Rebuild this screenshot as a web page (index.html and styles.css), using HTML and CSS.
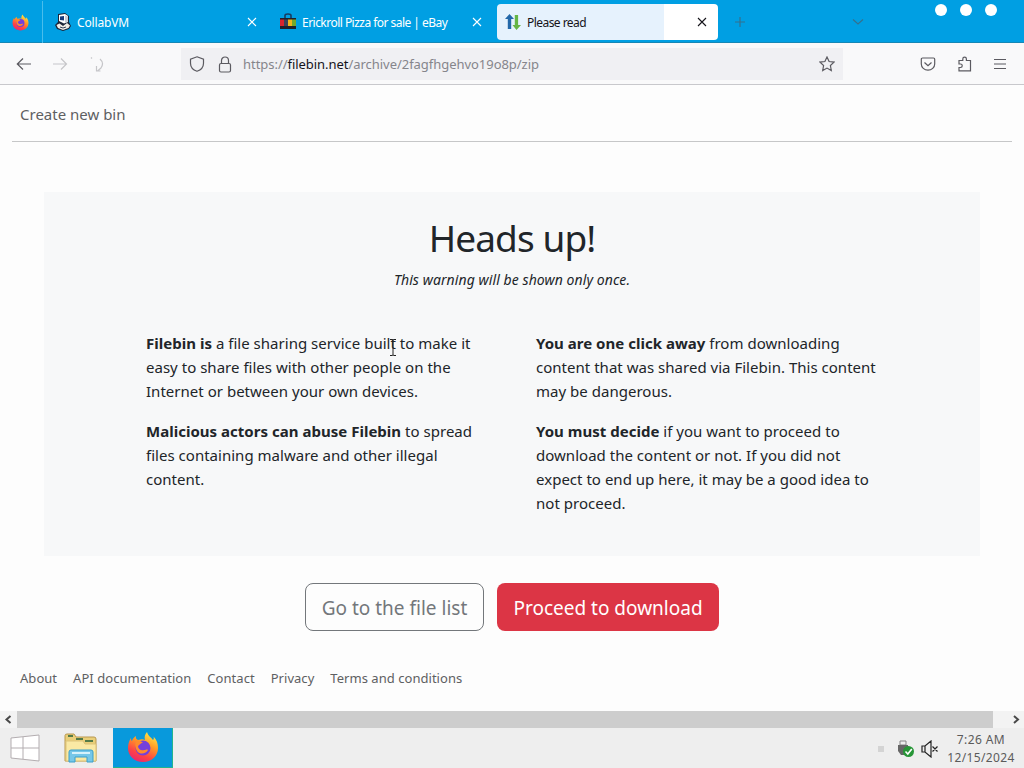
FILE: index.html
```
<!DOCTYPE html>
<html lang="en">
<head>
  <meta charset="UTF-8" />
  <meta name="viewport" content="width=device-width, initial-scale=1.0"/>
  <title>Please read</title>
  <link rel="stylesheet" href="styles.css">
</head>
<body>

  <!-- Tab strip -->
  <div class="tabs">
    <div class="pinned">
      <svg width="17" height="17" viewBox="0 0 32 32">
        <use href="#firefox"/>
      </svg>
    </div>
    <div class="tab tab-first">
      <svg class="favicon" width="18" height="18" viewBox="0 0 18 18">
        <path d="M4 1l7-1 4 3v6l2 4-2 3-6 2-6-2-2-4 3-3z" fill="#1b2438"/>
        <path d="M5 2l6-1 3 2v6l-4 1.500L5 8z" fill="#fff"/>
        <path d="M6 3.500l4-.5v4.500L6 7z" fill="#173a79"/>
        <path d="M11 2.500l3 1v5l-3 1.500z" fill="#c9ced8"/>
        <path d="M2.500 12l3-1.500L9 13l4-3 3 2.500-1.500 2.500L9 17l-5-2z" fill="#f0ece5"/>
        <path d="M6 14l3 1 3-1" fill="none" stroke="#34405a"/>
      </svg>
      <span class="tab-title title-collab">CollabVM</span>
      <svg class="close" width="10" height="10" viewBox="0 0 10 10"><path d="M1 1l8 8M9 1L1 9"/></svg>
    </div>
    <div class="tab tab-second">
      <svg class="favicon" width="16" height="17" viewBox="0 0 16 17">
        <path d="M5 6V2.5Q5 1 8 1t3 1.5V6" fill="none" stroke="#173b62" stroke-width="1.6"/>
        <path d="M0 5h4v9H0z" fill="#d9232e"/>
        <path d="M4 5h4v9H4z" fill="#3a4258"/>
        <path d="M8 5h4v9H8z" fill="#f2b51c"/>
        <path d="M12 5h4v9h-4z" fill="#75a92c"/>
        <path d="M0 13h16v3H0zM0 5h16v1.5H0z" fill="#20202b"/>
      </svg>
      <span class="tab-title title-ebay">Erickroll Pizza for sale | eBay</span>
      <svg class="close" width="10" height="10" viewBox="0 0 10 10"><path d="M1 1l8 8M9 1L1 9"/></svg>
    </div>
    <div class="tab active">
      <svg class="favicon" width="16" height="16" viewBox="0 0 16 16">
        <path d="M4.5 0L9 5H6.2v10H2.8V5H0z" fill="#2468a9"/>
        <path d="M11.5 16L7.5 11h2.3V1h3.3v10H16z" fill="#65b545"/>
      </svg>
      <span class="tab-title title-read">Please read</span>
      <svg class="close" width="10" height="10" viewBox="0 0 10 10"><path d="M1 1l8 8M9 1L1 9"/></svg>
    </div>
    <svg class="new-tab" width="12" height="12" viewBox="0 0 12 12"><path d="M6 1v10M1 6h10"/></svg>
    <svg class="all-tabs" width="12" height="8" viewBox="0 0 12 8"><path d="M1 1.5l5 4.5 5-4.5"/></svg>
    <div class="controls"><i></i><i></i><i></i></div>
  </div>

  <!-- Navigation toolbar -->
  <div class="toolbar">
    <svg class="nav-icon back" width="16" height="16" viewBox="0 0 16 16"><path d="M15 8H1.500M7 2.500L1.300 8 7 13.500"/></svg>
    <svg class="nav-icon forward" width="16" height="16" viewBox="0 0 16 16"><path d="M1 8h13.5M9 2.5L14.5 8 9 13.5"/></svg>
    <svg class="nav-icon reload" width="16" height="18" viewBox="0 0 16 18"><path d="M2 2.500l1 1M11 4q4.500 4 1 9l-3.500 3M7.500 11v5h4"/></svg>
    <div class="urlbar">
      <svg width="16" height="16" viewBox="0 0 16 16"><path d="M8 .8l6.500 2.400v4c0 4-2.600 6.700-6.500 8.100C4.100 13.900 1.500 11.200 1.500 7.200v-4z"/></svg>
      <svg class="lock" width="14" height="17" viewBox="0 0 14 17"><rect x="1.500" y="7.500" width="11" height="8.500" rx="1.500"/><path d="M3.500 7.500v-3a3.500 3.500 0 0 1 7 0v3"/></svg>
      <span class="url">https://<b>filebin.net</b>/archive/2fagfhgehvo19o8p/zip</span>
      <svg class="star" width="16" height="16" viewBox="0 0 16 16"><path d="M8 1l2.100 4.500 4.900.6-3.600 3.400.9 5L8 12.100l-4.300 2.400.9-5L1 6.100l4.900-.6z"/></svg>
    </div>
    <div class="tools">
      <svg width="16" height="16" viewBox="0 0 16 16"><path d="M2.500 2h11q1.200 0 1.200 1.200V8a6.700 6.200 0 0 1-13.400 0V3.200Q1.300 2 2.500 2zM4.500 6.500L8 9.800l3.500-3.300"/></svg>
      <svg width="16" height="16" viewBox="0 0 16 16"><path d="M2 4.500h3.800V3a1.800 1.800 0 0 1 3.600 0v1.500h4.100v10.300H2v-3.300h1.500a1.600 1.600 0 0 0 0-3.500H2z"/></svg>
      <svg width="14" height="16" viewBox="0 0 14 16"><path d="M1 3.500h12M1 8h12M1 12.500h12"/></svg>
    </div>
  </div>

  <!-- Page -->
  <main class="page">
    <nav class="navbar"><a>Create new bin</a></nav>

    <section class="notice">
      <h1>Heads up!</h1>
      <p class="lead"><em>This warning will be shown only once.</em></p>
      <div class="columns">
        <div class="column">
          <p><strong>Filebin is</strong> a file sharing service built to make it<br>easy to share files with other people on the<br>Internet or between your own devices.</p>
          <p><strong>Malicious actors can abuse Filebin</strong> to spread<br>files containing malware and other illegal<br>content.</p>
        </div>
        <div class="column">
          <p><strong>You are one click away</strong> from downloading<br>content that was shared via Filebin. This content<br>may be dangerous.</p>
          <p><strong>You must decide</strong> if you want to proceed to<br>download the content or not. If you did not<br>expect to end up here, it may be a good idea to<br>not proceed.</p>
        </div>
      </div>
    </section>

    <div class="actions">
      <a class="btn btn-outline"><span>Go to the file list</span></a>
      <a class="btn btn-danger"><span>Proceed to download</span></a>
    </div>

    <footer class="footer">
      <a>About</a><a>API documentation</a><a>Contact</a><a>Privacy</a><a>Terms and conditions</a>
    </footer>
  </main>

  <!-- Horizontal scrollbar -->
  <div class="scrollbar">
    <svg width="17" height="17" viewBox="0 0 17 17"><path d="M10.500 5L6.500 8.500l4 3.500"/></svg>
    <div class="thumb"></div>
    <svg width="17" height="17" viewBox="0 0 17 17"><path d="M7 5l4 3.500L7 12"/></svg>
  </div>

  <!-- Taskbar -->
  <div class="taskbar">
    <svg class="start" width="30" height="28" viewBox="0 0 30 28">
      <path d="M1 4L29 1v26L1 24zM13 3v22M1 14h28" fill="#fff" stroke="#b3adb0"/>
    </svg>
    <svg class="explorer" width="34" height="32" viewBox="0 0 34 32">
      <path d="M1 3.500Q1 2 3 2h7l2 3h18q2 0 2 2v22H1z" fill="#e9cf79" stroke="#b99850"/>
      <path d="M4 4h5M12 7h7M21 9h8" stroke="#527a48" stroke-width="2"/>
      <path d="M2 9h17l2 3h11v17H2z" fill="#fae9a4" stroke="#dcc37a"/>
      <path d="M5 30V20q0-2 2-2h20q2 0 2 2v10h-6v-5H11v5z" fill="#76c7e8" stroke="#3a9fcb"/>
      <path d="M8 21h18" stroke="#d6f2fb" stroke-width="2"/>
    </svg>
    <div class="task-active">
      <svg width="32" height="32" viewBox="0 0 32 32">
        <defs>
          <linearGradient id="flame" x1=".8" y1="0" x2=".3" y2="1">
            <stop offset="0" stop-color="#fff04b"/>
            <stop offset=".4" stop-color="#ff9a26"/>
            <stop offset=".75" stop-color="#ff4245"/>
            <stop offset="1" stop-color="#e62772"/>
          </linearGradient>
        </defs>
        <g id="firefox">
          <path d="M20 1c1 4 4 5 6 8 1-1 1-2 .5-3.500C30 9 31 13 31 17c0 8-6.500 14-15 14S1 25 1 17c0-4 1-7 3-10 0 2 .5 3 1 3 .5-2 2-4 4-5-.5 2 .2 3 2 4 3-1 5-1 7 0-1-3 0-6 2-8z" fill="url(#flame)"/>
          <circle cx="16" cy="17" r="7.500" fill="#7440dc"/>
          <path d="M9 10c3-1 5 0 7 2-3 0-3 2-5 3 0 3 3 5 6 4 2 0 3-1 4 0-2 4-8 5-11 1-2-3-2-7-1-10z" fill="#ff8b2c"/>
        </g>
      </svg>
    </div>
    <div class="tray">
      <i class="tray-dot"></i>
      <svg class="usb" width="18" height="18" viewBox="0 0 18 18">
        <path d="M3 1h6v4H3z" fill="#eee" stroke="#858585"/>
        <path d="M1 5h10v6l-2 4H4l-3-4z" fill="#666"/>
        <circle cx="11.500" cy="11.500" r="5.500" fill="#279637"/>
        <path d="M8.500 11.500l2.300 2.500 4-5" fill="none" stroke="#fff" stroke-width="1.600"/>
      </svg>
      <svg class="volume" width="18" height="18" viewBox="0 0 18 18">
        <path d="M1 6h3l6-5v16l-6-5H1zM4 6v6M11.500 6.500l5 5M16.500 6.500l-5 5" fill="none" stroke="#222" stroke-width="1.200"/>
      </svg>
      <div class="clock"><span class="time">7:26 AM</span><span class="date">12/15/2024</span></div>
    </div>
  </div>

  <!-- Text cursor -->
  <svg class="cursor" width="8" height="17" viewBox="0 0 8 17"><path d="M1 .5h2.500l.5 1 .5-1H7M4 1.500v14M1 16.500h2.500l.5-1 .5 1H7"/></svg>

</body>
</html>
```

FILE: styles.css
```
* { box-sizing: border-box; }
body {
  margin: 0;
  width: 1024px;
  height: 768px;
  overflow: hidden;
  display: flex;
  flex-direction: column;
  background: #fdfdfd;
  color: #212529;
  font-family: "Noto Sans", "Open Sans", sans-serif;
  font-size: 15px;
}
svg { flex: none; display: block; }

/* Tab strip */
.tabs {
  height: 43px;
  display: flex;
  align-items: center;
  padding-top: 1px;
  background: #009fe3;
  border-bottom: 1px solid #1687b5;
  font-size: 12px;
}
.pinned {
  width: 43px;
  height: 42px;
  padding: 13px 0 0 12px;
  border-right: 1px solid #49bdec;
}
.tab {
  height: 36px;
  display: flex;
  align-items: center;
  color: #fff;
}
.tab-first { width: 225px; padding: 0 11px; }
.tab-second { width: 229px; padding: 0 15px 0 12px; }
.active {
  width: 221px;
  padding: 0 11px 0 8px;
  border-radius: 4px;
  color: #15141a;
  background: linear-gradient(90deg, #e6f2fd 167px, #fff 167px);
}
.tab-title { margin-left: 6px; padding-top: 1px; white-space: nowrap; }
.tab-first .tab-title { margin-left: 5px; }
.title-collab { letter-spacing: -0.15px; }
.title-ebay { letter-spacing: -0.53px; }
.title-read { letter-spacing: -0.55px; }
.close {
  margin-left: auto;
  fill: none;
  stroke: currentColor;
  stroke-width: 1.1;
}
.new-tab, .all-tabs { fill: none; stroke: #34718e; stroke-width: 1.2; }
.new-tab { margin-left: 16px; }
.all-tabs { margin-left: 106px; }
.controls {
  display: flex;
  gap: 13px;
  align-self: flex-start;
  margin: 3px 0 0 71px;
}
.controls i {
  width: 12px;
  height: 12px;
  border-radius: 50%;
  background: #fff;
}

/* Toolbar */
.toolbar {
  height: 42px;
  display: flex;
  align-items: center;
  padding-left: 16px;
  padding-top: 1px;
  background: #f9f9fa;
  border-bottom: 1px solid #c8c8cc;
}
.toolbar svg { fill: none; stroke: #5b5a60; stroke-width: 1.2; }
.toolbar .forward, .toolbar .reload { stroke: #c6c6c9; }
.forward { margin-left: 20px; }
.reload { margin-left: 21px; }
.urlbar {
  width: 662px;
  height: 32px;
  margin-left: 76px;
  padding: 0 8px;
  display: flex;
  align-items: center;
  background: #f0f0f3;
}
.lock { margin-left: 13px; }
.url {
  margin-left: 11px;
  font-size: 13px;
  letter-spacing: -0.04px;
  color: #85858b;
  white-space: nowrap;
}
.url b { font-weight: 400; color: #15141a; }
.star { margin-left: auto; }
.tools {
  display: flex;
  align-items: center;
  gap: 21px;
  margin-left: 77px;
}
.tools svg:last-child { margin-left: -1px; }

/* Page */
.page { height: 626px; padding: 0 12px; }
.navbar {
  height: 57px;
  padding: 17px 8px 0;
  line-height: 24px;
  color: #5e6062;
  border-bottom: 1px solid #c6c7c8;
}
.notice {
  height: 364px;
  margin: 50px 32px 0;
  padding: 22px 0 0;
  background: #f7f8f9;
}
.notice h1 {
  margin: 0;
  font-size: 37px;
  font-weight: 400;
  line-height: 48px;
  letter-spacing: -0.9px;
  text-align: center;
}
.lead {
  margin: 6px 0 0;
  font-size: 14px;
  line-height: 24px;
  letter-spacing: 0.08px;
  text-align: center;
}
.columns {
  display: grid;
  grid-template-columns: 390px 390px;
  padding: 39px 0 0 102px;
}
.column p {
  margin: 0 0 16px;
  line-height: 24px;
  white-space: nowrap;
  letter-spacing: 0.02px;
}
.actions {
  display: flex;
  justify-content: center;
  gap: 13px;
  margin-top: 27px;
}
.btn {
  height: 48px;
  padding-top: 2px;
  display: flex;
  align-items: center;
  justify-content: center;
  border-radius: 8px;
  font-size: 19px;
  white-space: nowrap;
}
.btn-outline { width: 179px; border: 1px solid #73777b; color: #73777b; }
.btn-danger { width: 222px; background: #dc3545; color: #fff; }
.footer {
  display: flex;
  gap: 16px;
  margin: 37px 0 0 8px;
  font-size: 13px;
  line-height: 21px;
  letter-spacing: 0.04px;
  color: #5e6062;
}

/* Scrollbar */
.scrollbar {
  height: 17px;
  display: flex;
  background: #f3f3f3;
}
.scrollbar svg { fill: none; stroke: #484848; stroke-width: 2; }
.thumb { width: 976px; margin-right: 14px; background: #cdcdcd; }

/* Taskbar */
.taskbar {
  height: 40px;
  display: flex;
  align-items: center;
  background: #eeeeee;
}
.start { margin-left: 10px; }
.explorer { margin-left: 24px; }
.task-active {
  width: 60px;
  height: 40px;
  margin-left: 15px;
  padding: 3px 14px;
  background: #0899dc;
  border: 1px solid #23b48d;
  border-width: 0 1px 1px 0;
}
.tray {
  display: flex;
  align-items: center;
  margin-left: auto;
  padding: 2px 9px 0 0;
}
.tray-dot { width: 6px; height: 6px; background: #d4d4d4; }
.usb { margin-left: 13px; }
.volume { margin-left: 6px; }
.clock {
  width: 68px;
  margin-left: 8px;
  display: flex;
  flex-direction: column;
  align-items: center;
  font-size: 12px;
  line-height: 18px;
  color: #5b5b5b;
}
.time { letter-spacing: 0.4px; }
.date { letter-spacing: 0.35px; }

.cursor {
  position: absolute;
  left: 389px;
  top: 339px;
  fill: none;
  stroke: #222;
}
```
